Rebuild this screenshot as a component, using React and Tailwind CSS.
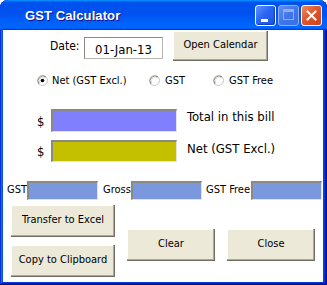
import React from "react";

const F = "font-['DejaVu_Sans_Condensed','DejaVu_Sans',sans-serif]";

function Radio({ checked }) {
  return (
    <svg width="11" height="11" viewBox="0 0 11 11" className="shrink-0">
      <circle cx="5.5" cy="5.5" r="5" fill="#fff" stroke="#c8c6bc" strokeWidth="1" />
      <path d="M9 2 A5 5 0 0 0 2 9" fill="none" stroke="#8c8a80" strokeWidth="1" />
      <path d="M8.2 2.8 A4 4 0 0 0 2.8 8.2" fill="none" stroke="#e0ded4" strokeWidth="1" />
      {checked && <circle cx="5.5" cy="5.5" r="1.8" fill="#000" />}
    </svg>
  );
}

function Btn({ children, className }) {
  return (
    <div
      className={
        "flex items-center justify-center bg-[#ece9d8] text-black shadow-[inset_-1px_-1px_0_#716f64,inset_-2px_-2px_0_#aca899,inset_1px_1px_0_#ffffff] " +
        className
      }
    >
      {children}
    </div>
  );
}

function Field({ className }) {
  return (
    <div
      className={
        "border-t-2 border-l-2 border-b border-r border-t-[#8a8a84] border-l-[#8a8a84] border-b-[#e4e3dc] border-r-[#e4e3dc] " +
        className
      }
    />
  );
}

export default function App() {
  return (
    <div className={"w-[327px] h-[285px] flex flex-col rounded-t-[8px] bg-[#0842d8] shadow-[inset_-1px_-1px_0_#00138c,inset_1px_1px_0_#0831d9,inset_-2px_-2px_0_#001ea0,inset_2px_2px_0_#166aee,inset_-3px_-3px_0_#003bda,inset_3px_3px_0_#0855dd] overflow-hidden " + F}>
      {/* title bar */}
      <div className="h-[30px] shrink-0 flex items-center rounded-t-[8px] bg-[linear-gradient(180deg,#0997ff,#0053ee_8%,#0050ee_40%,#0066ff_88%,#0066ff_93%,#005bff_95%,#003dd7_96%,#003dd7)]">
        <div className="ml-[25px] mt-[1px] text-white font-bold text-[13px] leading-[16px] font-['Liberation_Sans',sans-serif] [text-shadow:1px_1px_#0f1089] tracking-[0.1px]">
          GST Calculator
        </div>
        <div className="ml-auto mr-[5px] flex gap-[2px] mt-[1px]">
          <div className="relative w-[21px] h-[21px] rounded-[3px] border border-white bg-[linear-gradient(135deg,#5d94ff,#2a66f2_45%,#1c52e0)] shadow-[inset_-1px_-1px_1px_#1140c0]">
            <div className="absolute left-[5px] top-[13px] w-[7px] h-[3px] bg-white" />
          </div>
          <div className="relative w-[21px] h-[21px] rounded-[3px] border border-[#8fb0f6] bg-[linear-gradient(135deg,#5f8ff0,#3f76ec_50%,#3a6fe6)]">
            <div className="absolute left-[4px] top-[3px] w-[11px] h-[11px] border border-[#90acf2] border-t-[3px]" />
          </div>
          <div className="relative w-[21px] h-[21px] rounded-[3px] border border-white bg-[linear-gradient(135deg,#f08a5e,#e0572c_45%,#c8421d)] flex items-center justify-center">
            <svg width="11" height="11" viewBox="0 0 11 11">
              <path d="M1.5 1.5 L9.5 9.5 M9.5 1.5 L1.5 9.5" stroke="#fff" strokeWidth="2" strokeLinecap="square" />
            </svg>
          </div>
        </div>
      </div>

      {/* body */}
      <div className="ml-[3px] mr-[4px] h-[252px] bg-white flex flex-col text-black text-[11px]">
        {/* row 1 */}
        <div className="flex items-start pl-[47px]">
          <div className="w-[34px] mt-[9px] text-[12px] leading-[14px]">Date:</div>
          <div className="w-[79px] h-[22px] mt-[7px] bg-white border border-[#b8b6ac] border-t-[#8a8a84] border-l-[#8a8a84] flex items-center justify-center text-[13px] leading-[15px] pt-[3px]">
            01-Jan-13
          </div>
          <Btn className="ml-[10px] mt-[1px] w-[95px] h-[30px] text-[11px] pb-[2px]">Open Calendar</Btn>
        </div>

        {/* row 2 radios */}
        <div className="flex items-center mt-[14px] h-[11px] text-[11px] leading-[13px]">
          <div className="flex items-center gap-[4px] pl-[34px] w-[146px]">
            <Radio checked />
            <span>Net (GST Excl.)</span>
          </div>
          <div className="flex items-center gap-[5px] w-[64px]">
            <Radio />
            <span>GST</span>
          </div>
          <div className="flex items-center gap-[5px]">
            <Radio />
            <span>GST Free</span>
          </div>
        </div>

        {/* row 3 */}
        <div className="flex items-start pl-[34px] mt-[23px]">
          <div className="w-[14px] h-[23px] flex items-center text-[13px] pt-[2px]">$</div>
          <Field className="w-[126px] h-[23px] bg-[#8080ff]" />
          <div className="ml-[10px] text-[13px] leading-[16px]">Total in this bill</div>
        </div>

        {/* row 4 */}
        <div className="flex items-start pl-[34px] mt-[8px]">
          <div className="w-[14px] h-[22px] flex items-center text-[13px] pt-[2px]">$</div>
          <Field className="w-[126px] h-[22px] bg-[#c4c000]" />
          <div className="ml-[10px] mt-[1px] text-[13px] leading-[16px]">Net (GST Excl.)</div>
        </div>

        {/* row 5 */}
        <div className="flex items-center pl-[4px] mt-[19px] h-[19px] text-[11px]">
          <div className="w-[20px]">GST</div>
          <Field className="w-[71px] h-[19px] bg-[#7b98df]" />
          <div className="w-[33px] pl-[5px]">Gross</div>
          <Field className="w-[71px] h-[19px] bg-[#7b98df]" />
          <div className="w-[49px] pl-[4px]">GST Free</div>
          <Field className="w-[71px] h-[19px] bg-[#7b98df]" />
        </div>

        {/* row 6 */}
        <div className="flex items-start mt-[5px]">
          <div className="flex flex-col gap-[8px] pl-[8px]">
            <Btn className="w-[104px] h-[32px] text-[11px] pb-[1px]">Transfer to Excel</Btn>
            <Btn className="w-[104px] h-[32px] text-[11px] pb-[1px]">Copy to Clipboard</Btn>
          </div>
          <Btn className="ml-[12px] mt-[24px] w-[88px] h-[32px] text-[11px] pb-[1px]">Clear</Btn>
          <Btn className="ml-[12px] mt-[24px] w-[88px] h-[32px] text-[11px] pb-[1px]">Close</Btn>
        </div>
      </div>
    </div>
  );
}
